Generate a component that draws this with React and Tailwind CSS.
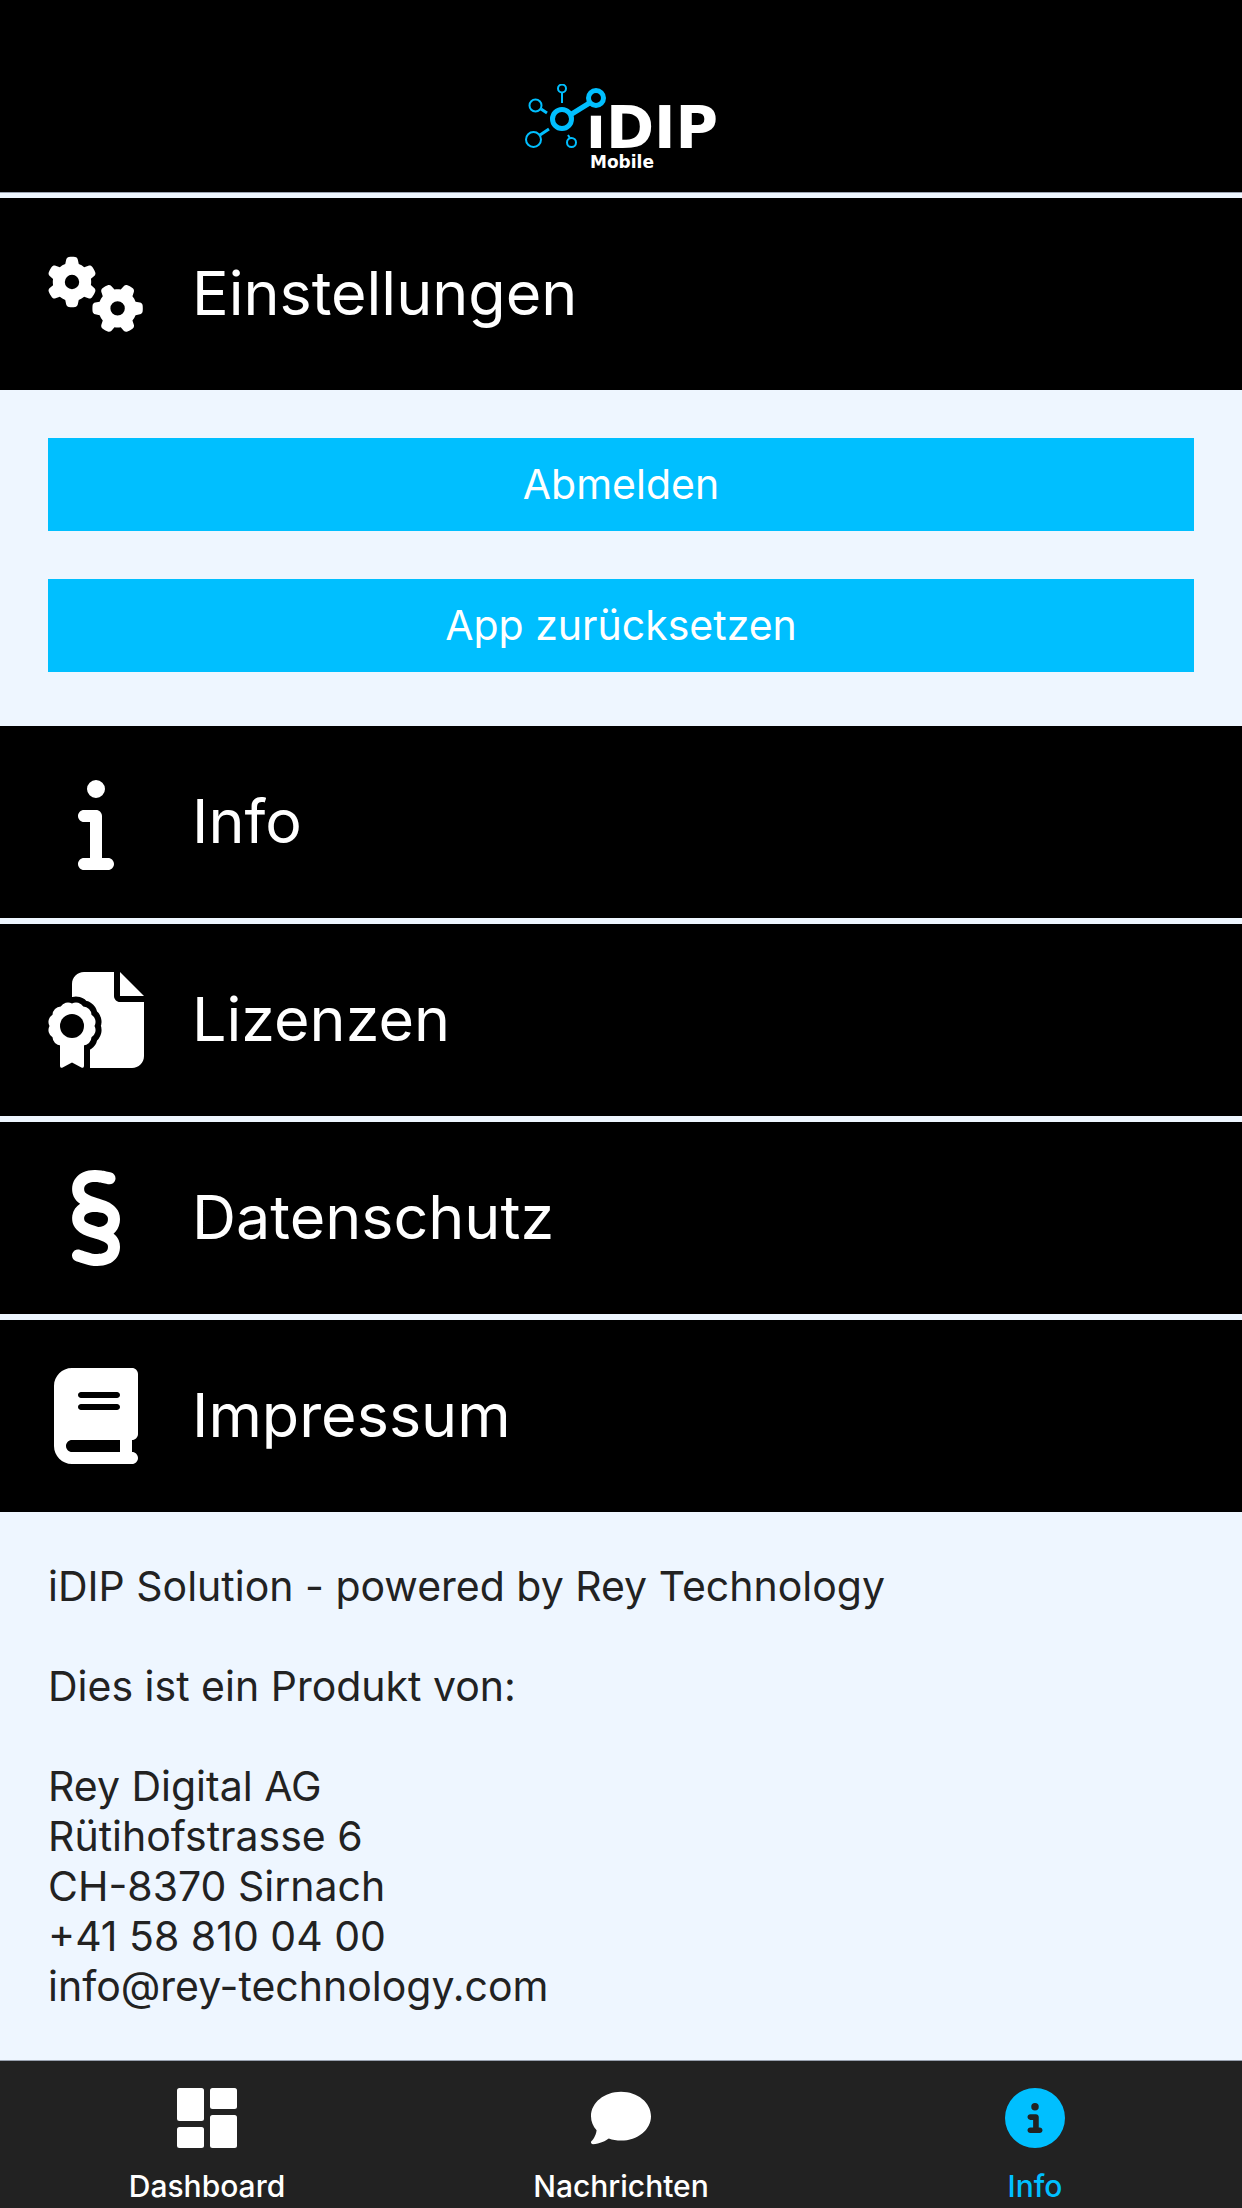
import { useState } from "react";
import { FaBook, FaCircleInfo, FaComment, FaGears, FaInfo, FaSection } from "react-icons/fa6";

// 12 scallops around the seal
const seal = Array.from({ length: 12 }, (_, i) => {
  const a = (i * Math.PI) / 6;
  const x = (128 + 120 * Math.cos(a)).toFixed(1);
  const y = (288 + 120 * Math.sin(a)).toFixed(1);
  return i === 0 ? `M${x} ${y}` : `A45 45 0 0 1 ${x} ${y}`;
}).join("") + "A45 45 0 0 1 248 288Z";

const ribbon = "M64 380V500c0 9 7 14 14 9L128 482l50 27c7 5 14 0 14-9V380Z";

function CertificateIcon({ className }) {
  return (
    <svg viewBox="0 0 512 512" fill="currentColor" className={className} aria-hidden="true">
      <path d="M192 0H352V128c0 17.700 14.300 32 32 32H512V448c0 35.300-28.700 64-64 64H128V64c0-35.300 28.700-64 64-64Z" />
      <path d="M384 0V128H512Z" />
      <g stroke="#000" strokeWidth="64" strokeLinejoin="round" fill="#000">
        <path d={seal} />
        <path d="M64 380V560H192V380Z" />
      </g>
      <path d={seal} />
      <path d={ribbon} />
      <circle cx="128" cy="288" r="64" fill="#000" />
    </svg>
  );
}

function DashboardIcon({ className }) {
  return (
    <svg viewBox="0 0 60 60" fill="currentColor" className={className} aria-hidden="true">
      <rect x="0" y="0" width="27" height="33" rx="2.500" />
      <rect x="33" y="0" width="27" height="21" rx="2.500" />
      <rect x="0" y="39" width="27" height="21" rx="2.500" />
      <rect x="33" y="27" width="27" height="33" rx="2.500" />
    </svg>
  );
}

function Logo() {
  return (
    <svg viewBox="0 0 192 88" className="h-22 w-48" role="img" aria-label="iDIP Mobile">
      <text fill="#fff" fontFamily="DejaVu Sans, sans-serif" fontWeight="700">
        <tspan x="61" y="64" fontSize="58">iDIP</tspan>
        <tspan x="65" y="84" fontSize="17">Mobile</tspan>
      </text>
      {/* the upper node takes the place of the dot on the i */}
      <path d="M58 0H80V29H58Z" fill="#000" />
      <g fill="#000" stroke="#00bfff">
        <path d="M37 36L71 15" strokeWidth="5" />
        <path d="M37 9V19M43 51L46 56" strokeWidth="2" />
        <path d="M16 25L22 29M15 51L24 45" strokeWidth="3" />
        <circle cx="71" cy="14" r="7.500" strokeWidth="5" />
        <circle cx="37" cy="35" r="9.500" strokeWidth="5" />
        <circle cx="37" cy="4.500" r="4" strokeWidth="2" />
        <circle cx="10.500" cy="21.500" r="6" strokeWidth="2" />
        <circle cx="8.500" cy="55.500" r="7.500" strokeWidth="2" />
        <circle cx="46.500" cy="58.500" r="4.500" strokeWidth="2" />
      </g>
    </svg>
  );
}

const tabs = [
  { key: "dashboard", label: "Dashboard", icon: DashboardIcon },
  { key: "messages", label: "Nachrichten", icon: FaComment },
  { key: "info", label: "Info", icon: FaCircleInfo },
];

function Section({ icon: Icon, title, open, onToggle, children }) {
  return (
    <section>
      <h2>
        <button
          type="button"
          aria-expanded={open}
          onClick={onToggle}
          className="flex h-48 w-full items-center gap-12 bg-black px-12 text-left text-[61px] text-white"
        >
          <span className="flex w-24 shrink-0 justify-center">
            <Icon className="size-24" />
          </span>
          {title}
        </button>
      </h2>
      {open && children}
    </section>
  );
}

export default function App() {
  const [open, setOpen] = useState({ settings: true, imprint: true });
  const [tab, setTab] = useState("info");

  const toggle = (key) => setOpen({ ...open, [key]: !open[key] });

  return (
    <div className="flex min-h-screen flex-col bg-[#eef6ff] font-['Inter',sans-serif] text-[#222]">
      <header className="flex h-[193px] items-end justify-center border-b border-gray-400 bg-black pb-5">
        <Logo />
      </header>

      <main className="flex flex-1 flex-col gap-[6px] pt-[5px]">
        <Section icon={FaGears} title="Einstellungen" open={!!open.settings} onToggle={() => toggle("settings")}>
          <div className="flex flex-col gap-12 px-12 pt-12 pb-12 text-[41px] text-white">
            <button type="button" className="h-[93px] w-full bg-[#00bfff]">Abmelden</button>
            <button type="button" className="h-[93px] w-full bg-[#00bfff]">App zurücksetzen</button>
          </div>
        </Section>
        <Section icon={FaInfo} title="Info" open={!!open.info} onToggle={() => toggle("info")} />
        <Section icon={CertificateIcon} title="Lizenzen" open={!!open.licences} onToggle={() => toggle("licences")} />
        <Section icon={FaSection} title="Datenschutz" open={!!open.privacy} onToggle={() => toggle("privacy")} />
        <Section icon={FaBook} title="Impressum" open={!!open.imprint} onToggle={() => toggle("imprint")}>
          <div className="space-y-[50px] px-12 py-[49px] text-[41px] leading-[50px]">
            <p>iDIP Solution - powered by Rey Technology</p>
            <p>Dies ist ein Produkt von:</p>
            <address className="not-italic">
              Rey Digital AG<br />
              Rütihofstrasse 6<br />
              CH-8370 Sirnach<br />
              <a href="tel:+41588100400">+41 58 810 04 00</a><br />
              <a href="mailto:info@rey-technology.com">info@rey-technology.com</a>
            </address>
          </div>
        </Section>
      </main>

      {/* Tab bar */}
      <nav className="grid grid-cols-3 border-t border-gray-400 bg-[#222]">
        {tabs.map(({ key, label, icon: Icon }) => (
          <button
            key={key}
            type="button"
            onClick={() => setTab(key)}
            className={`flex flex-col items-center gap-5 pt-[27px] pb-1 text-[30px] leading-9 font-medium ${tab === key ? "text-[#00bfff]" : "text-white"}`}
          >
            <Icon className="size-15" />
            {label}
          </button>
        ))}
      </nav>
    </div>
  );
}
